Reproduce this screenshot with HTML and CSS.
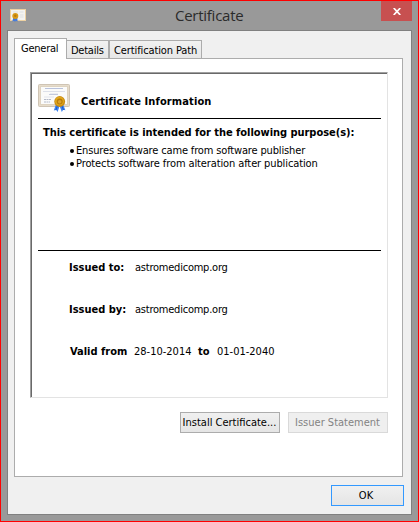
FILE: index.html
```html
<!DOCTYPE html>
<html lang="en">
<head>
<meta charset="utf-8">
<title>Certificate</title>
<link rel="stylesheet" href="styles.css">
</head>
<body>
<main class="window">
  <header class="titlebar">
    <svg class="app-icon" viewBox="0 0 16 14" width="16" height="14">
      <rect x=".5" y=".5" width="15" height="11" fill="#f4f3f0" stroke="#edd1a2"/>
      <path d="M3 3h5M9.500 3h4M10 6h3.500M10 8h3.500" stroke="#dcdfe3"/>
      <path d="M3.500 8 2.300 12.600l1.800-.9.900 1.300.7-1.300 1.900.9L7.200 8z" fill="#3e78df"/>
      <circle cx="5.300" cy="7" r="3" fill="#d99a18"/>
      <circle cx="5.300" cy="6.800" r="1.200" fill="#b97b0b"/>
    </svg>
    <h1 class="title">Certificate</h1>
    <button class="close" aria-label="Close">
      <svg viewBox="0 0 8 7" width="8" height="7"><path d="M.7 0 7.300 7M7.300 0 .7 7" stroke="#fff" stroke-width="1.700"/></svg>
    </button>
  </header>
  <section class="client">
    <nav class="tabs">
      <span class="tab tab-active">General</span>
      <span class="tab tab-details">Details</span>
      <span class="tab tab-path">Certification Path</span>
    </nav>
    <div class="panel">
      <div class="sheet">
        <div class="heading">
          <svg class="cert-icon" viewBox="0 0 32 28" width="32" height="28">
            <rect x=".5" y=".5" width="31" height="22" rx="1" fill="#ded3c0" stroke="#cfc4b4"/>
            <rect x="1.500" y="1.500" width="29" height="20" fill="none" stroke="#eee5d7" stroke-dasharray="1 1"/>
            <rect x="3" y="3" width="26" height="17" fill="#fbfbfa"/>
            <path d="M7 4.500h18" stroke="#b9c2db"/>
            <path d="M5 7.500h22M12 10h8" stroke="#d5d9e4" stroke-width=".8"/>
            <path d="M11 10.500h9" stroke="#b9bfd6" stroke-width=".8"/>
            <path d="M6 13h10" stroke="#dde0e8" stroke-width=".8"/>
            <path d="M6 15.500h7M6 18h6" stroke="#b3b9c8" stroke-dasharray="2 .5"/>
            <path d="M18 20 15.800 26.500l2.400-.6L19.600 28l2-6 2.200 6 1.400-2.200 2.200.5L25 20z" fill="#3f83ee"/>
            <path d="M19.300 22l-1.400 4M24 22l1.500 4" stroke="#1c5acb"/>
            <circle cx="21.700" cy="17.500" r="5.400" fill="#c98a10"/>
            <circle cx="21.500" cy="17.200" r="4.400" fill="#e0a71c"/>
            <circle cx="21.700" cy="17.500" r="3" fill="#b97c08"/>
            <circle cx="21.700" cy="17.800" r="1.800" fill="#dca22c"/>
          </svg>
          <h2>Certificate Information</h2>
        </div>
        <div class="purposes">
          <p class="lead"><b>This certificate is intended for the following purpose(s):</b></p>
          <ul>
            <li class="tight">Ensures software came from software publisher</li>
            <li>Protects software from alteration after publication</li>
          </ul>
        </div>
        <div class="details">
          <p class="row"><b class="label">Issued to:</b><span class="org">astromedicomp.org</span></p>
          <p class="row"><b class="label">Issued by:</b><span class="org">astromedicomp.org</span></p>
          <p class="row row-valid"><b class="label-valid">Valid from</b><span class="date">28-10-2014</span><b class="label-until">to</b><span>01-01-2040</span></p>
        </div>
      </div>
      <div class="actions">
        <button class="btn">Install Certificate...</button>
        <button class="btn" disabled>Issuer Statement</button>
      </div>
    </div>
    <footer class="footer"><button class="btn btn-ok">OK</button></footer>
  </section>
</main>
</body>
</html>
```
FILE: styles.css
```css
* { box-sizing: border-box; margin: 0; padding: 0; }
body { width: 419px; height: 522px; overflow: hidden; }
.window {
  width: 419px; height: 522px;
  border: 1px solid #f00;
  background: #999;
  color: #000;
  font: 11px/13px "DejaVu Sans Condensed", "DejaVu Sans", sans-serif;
}
span, b, h1, h2, li, button { white-space: nowrap; }
svg { display: block; }
button { font: inherit; color: inherit; }

.titlebar { display: flex; height: 29px; padding: 0 6px 0 9px; align-items: flex-start; }
.app-icon { margin-top: 8px; }
.title { margin-left: 149px; margin-top: 4px; font: 15px/21px "Open Sans", sans-serif; color: #2b2b2b; letter-spacing: -.26px; }
.close {
  display: flex; align-items: center; justify-content: center;
  width: 31px; height: 20px; margin-left: auto; padding-top: 1px;
  border: 0; background: #c75050;
}

.client {
  display: flex; flex-direction: column;
  width: 405px; height: 485px; margin-left: 6px; padding: 7px 8px 0 6px;
  border: 1px solid #808080; background: #f0f0f0;
}
.tabs { display: flex; align-items: flex-end; height: 21px; margin-bottom: -1px; }
.tab {
  height: 19px; padding: 3px 0 0 4px;
  border: 1px solid #acacac;
  background: linear-gradient(#f1f1f1, #e7e7e7);
}
.tab-active {
  position: relative; width: 53px; height: 21px; padding: 3px 0 0 6px;
  border-bottom: 0; background: #fff; letter-spacing: -.25px;
}
.tab-details { width: 42px; border-left: 0; letter-spacing: -.25px; }
.tab-path { width: 93px; letter-spacing: -.11px; }
.panel { width: 389px; height: 419px; padding: 13px 14px 13px 15px; border: 1px solid #acacac; background: #fff; }

.sheet {
  width: 358px; height: 326px; padding: 1px 6px 0 7px;
  border: 1px solid #e3e3e3;
  border-left-color: #a0a0a0;
  border-top-color: #a0a0a0;
  box-shadow: inset 1px 1px 0 #696969;
}
.heading { display: flex; height: 45px; padding-top: 10px; border-bottom: 1px solid #000; }
.heading h2 { margin: 11px 0 0 11px; font-size: 11px; line-height: 13px; letter-spacing: .12px; }
.purposes { height: 132px; padding: 7px 0 0 5px; border-bottom: 1px solid #000; }
.lead { margin-bottom: 5px; letter-spacing: -.04px; }
ul { list-style: none; }
li { display: flex; align-items: center; height: 13px; margin-left: 26px; letter-spacing: -.11px; }
li.tight { letter-spacing: -.15px; }
li::before { content: ""; width: 4px; height: 4px; margin: 0 2px 0 1px; border-radius: 50%; background: #000; }
.details { padding: 10px 0 0 31px; }
.row { display: flex; height: 42px; }
.label { width: 66px; }
.org { letter-spacing: -.23px; }
.row-valid { padding-left: 1px; }
.label-valid { width: 64px; }
.date { width: 64px; }
.label-until { width: 19px; }

.actions { display: flex; justify-content: flex-end; gap: 8px; margin-top: 14px; }
.btn {
  display: flex; align-items: center; justify-content: center;
  width: 100px; height: 21px; padding-right: 1px;
  border: 1px solid #acacac; background: linear-gradient(#f0f0f0, #e5e5e5);
}
.btn:disabled { border-color: #d9d9d9; background: #efefef; color: #838383; }
.footer { display: flex; justify-content: flex-end; margin: 8px -1px 0 0; }
.btn-ok { width: 73px; padding-right: 3px; border-color: #3399ff; }
```
